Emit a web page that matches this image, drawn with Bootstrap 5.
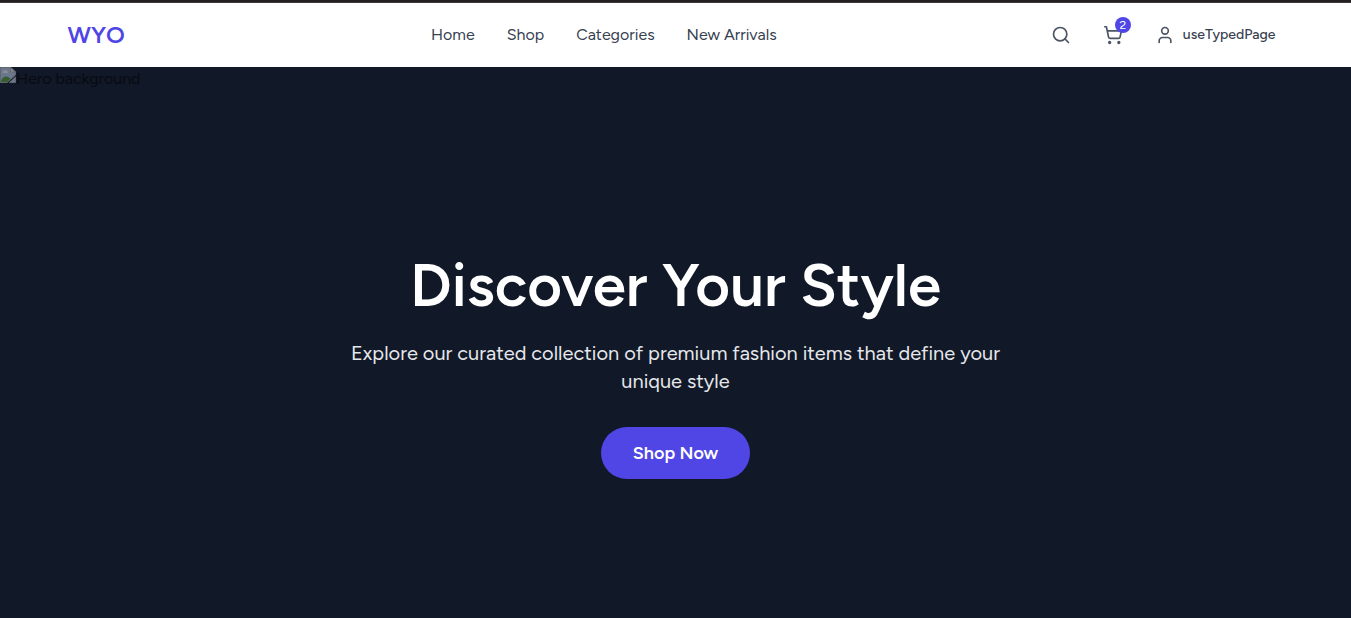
<!DOCTYPE html>
<html lang="en">
<head>
<meta charset="utf-8">
<meta name="viewport" content="width=device-width, initial-scale=1">
<title>WYO</title>
<link href="https://cdn.jsdelivr.net/npm/bootstrap@5.3.0/dist/css/bootstrap.min.css" rel="stylesheet">
<style>
  body { font-family: Figtree, Lato, sans-serif; color: #000; overflow: hidden; }
  .topline { height: 3px; background: #231f20; border-bottom: 1px solid #3b3b3d; }
  .site-nav { height: 64px; color: #374151; }
  .wrap { max-width: 1280px; padding: 0 32px; }
  .brand { font-size: 24px; font-weight: 600; line-height: 32px; color: #4f46e5; }
  .links { gap: 32px; margin-left: 40px; font-size: 16px; line-height: 24px; }
  .links a, .user { color: #374151; text-decoration: none; white-space: nowrap; }
  .user { font-size: 14px; font-weight: 500; line-height: 20px; }
  .ico { width: 20px; height: 20px; fill: none; stroke: #4b5563; stroke-width: 2; stroke-linecap: round; stroke-linejoin: round; display: block; }
  .count { top: 0; left: 20px; width: 16px; height: 16px; background: #4f46e5; color: #fff; font-size: 12px; line-height: 16px; }
  .hero { height: 600px; background: #111827; }
  .alt { top: 0; left: 0; opacity: .5; font-size: 16px; line-height: 24px; }
  .alt svg { width: 16px; height: 16px; display: block; }
  .hero h1 { font-size: 60px; font-weight: 600; line-height: 60px; margin: 0 0 24px; color: #fff; white-space: nowrap; }
  .tagline { font-size: 20px; line-height: 28px; color: #e5e7eb; margin: 0 0 32px; }
  .cta, .cta:hover { padding: 12px 32px; border: 0; background: #4f46e5; color: #fff; font-size: 18px; font-weight: 600; line-height: 28px; }
</style>
</head>
<body>
<div class="topline"></div>
<header class="site-nav bg-white">
  <div class="wrap mx-auto h-100 d-flex align-items-center justify-content-between">
    <a class="brand text-decoration-none" href="#">WYO</a>
    <nav class="links d-flex"><a href="#">Home</a><a href="#">Shop</a><a href="#">Categories</a><a href="#">New Arrivals</a></nav>
    <div class="d-flex align-items-center gap-3">
      <div class="p-2"><svg class="ico" viewBox="0 0 24 24"><circle cx="11" cy="11" r="8"/><path d="m21 21-4.3-4.3"/></svg></div>
      <div class="position-relative p-2"><svg class="ico" viewBox="0 0 24 24"><circle cx="8" cy="21" r="1"/><circle cx="19" cy="21" r="1"/><path d="M2.05 2.05h2l2.66 12.42a2 2 0 0 0 2 1.58h9.78a2 2 0 0 0 1.95-1.57l1.65-7.43H5.12"/></svg><span class="count position-absolute rounded-circle text-center">2</span></div>
      <a class="user d-flex align-items-center gap-2 p-2" href="#"><svg class="ico" viewBox="0 0 24 24"><circle cx="12" cy="7" r="4"/><path d="M19 21v-2a4 4 0 0 0-4-4H9a4 4 0 0 0-4 4v2"/></svg><span>useTypedPage</span></a>
    </div>
  </div>
</header>
<main class="hero position-relative d-flex flex-column align-items-center justify-content-center text-center">
  <div class="alt position-absolute d-flex">
    <svg viewBox="0 0 16 16"><path d="M.5.5H11L15.5 5v3L7 15.5H.5z" fill="#c3d5f3" stroke="#b5b5b5"/><path d="M10.5.5V5h5z" fill="#fff" stroke="#b5b5b5"/><path d="M2.5 6a1.5 1.5 0 0 1 1.3-2 2 2 0 0 1 3.6.5A1 1 0 0 1 8 6z" fill="#fff"/><path d="M1 14c1-3 3-4.500 5-4.500s3.500 1 4.500 2.500L7 15H1z" fill="#57a63b"/><path d="M15.500 10v5.500H9.500z" fill="#c3d5f3" stroke="#b5b5b5"/></svg>
    <span>Hero background</span>
  </div>
  <h1>Discover Your Style</h1>
  <p class="tagline">Explore our curated collection of premium fashion items that define your<br>unique style</p>
  <a class="cta btn rounded-pill" href="#">Shop Now</a>
</main>
<script src="https://cdn.jsdelivr.net/npm/bootstrap@5.3.0/dist/js/bootstrap.bundle.min.js"></script>
</body>
</html>
